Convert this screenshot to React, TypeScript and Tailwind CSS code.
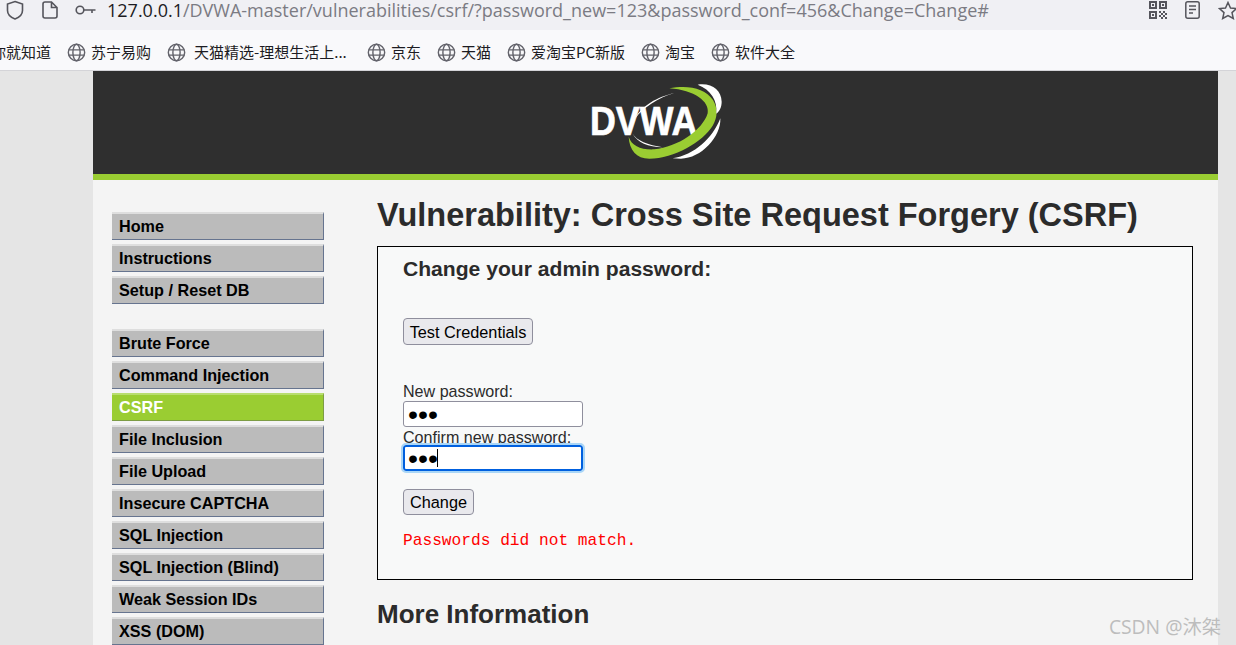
import { Fragment } from 'react';

const SANS = "font-['Liberation_Sans',Arial,sans-serif]";

const BOOKMARKS = [
  { label: '苏宁易购', cls: 'w-[100px] gap-[5px]' },
  { label: '天猫精选-理想生活上...', cls: 'w-[200px] gap-[8px]' },
  { label: '京东', cls: 'w-[70px] gap-[5px]' },
  { label: '天猫', cls: 'w-[70px] gap-[5px]' },
  { label: '爱淘宝PC新版', cls: 'w-[134px] gap-[5px]' },
  { label: '淘宝', cls: 'w-[70px] gap-[5px]' },
  { label: '软件大全', cls: 'w-[100px] gap-[5px]' },
];

const MENU_TOP = ['Home', 'Instructions', 'Setup / Reset DB'];
const MENU_VULNS = [
  'Brute Force',
  'Command Injection',
  'CSRF',
  'File Inclusion',
  'File Upload',
  'Insecure CAPTCHA',
  'SQL Injection',
  'SQL Injection (Blind)',
  'Weak Session IDs',
  'XSS (DOM)',
];

function GlobeIcon() {
  return (
    <svg width="19" height="19" viewBox="0 0 20 20" fill="none" stroke="#63636b" strokeWidth="1.5" className="shrink-0">
      <circle cx="10" cy="10" r="8.6" />
      <ellipse cx="10" cy="10" rx="3.8" ry="8.6" />
      <path d="M1.8 7.2h16.4M1.8 12.8h16.4" />
    </svg>
  );
}

function Logo() {
  return (
    <svg width="190" height="103" viewBox="0 3 570 309">
      <text
        x="87"
        y="195"
        fill="#fff"
        stroke="#fff"
        strokeWidth="2"
        fontFamily="Liberation Sans, Arial, sans-serif"
        fontWeight="700"
        fontSize="122"
        textLength="322"
        lengthAdjust="spacingAndGlyphs"
      >
        DVWA
      </text>
      <path
        d="M325 55C380 44 432 54 456 90C471 115 470 142 455 167C425 216 340 265 265 266C226 266 205 240 203 200C212 228 240 240 280 238C350 232 425 180 440 130C447 95 400 60 325 55Z"
        fill="#9acd32"
      />
      <path d="M410 44C452 38 481 60 482 95C482 110 476 124 466 131C470 90 450 60 410 44Z" fill="#fff" />
      <path d="M335 265C400 255 455 205 478 145C481 200 420 266 360 266Z" fill="#fff" />
      <path d="M340 69C290 80 240 108 222 146C245 114 290 84 340 69Z" fill="#fff" />
      <path d="M214 190C225 212 262 226 305 232C262 232 228 218 214 190Z" fill="#fff" />
    </svg>
  );
}

function MenuItem({ label, active }: { label: string; active?: boolean }) {
  return (
    <div
      className={`h-[28px] w-[212px] pl-[7px] border-t-2 border-r border-b text-[16.200px] leading-[24px] font-bold whitespace-nowrap ${
        active
          ? 'bg-[#9acd32] text-white border-t-[#b8dd6e] border-r-[#7d9c45] border-b-[#7d9c45]'
          : 'bg-[#bbbbbb] text-black border-t-[#dedede] border-r-[#66748f] border-b-[#66748f]'
      }`}
    >
      {label}
    </div>
  );
}

export default function App() {
  return (
    <div className={`h-[645px] w-[1236px] overflow-hidden relative bg-[#e5e5e5] ${SANS}`}>
      {/* browser toolbar */}
      <div className="h-[30px] bg-[#f0f0f4] flex items-center pl-[6px] pb-[10px]">
        <svg width="18" height="20" viewBox="0 0 18 20" fill="none" stroke="#55555c" strokeWidth="1.6" className="shrink-0">
          <path d="M9 1.5 16.5 4v6.5C16.5 14.5 13 17.5 9 19 5 17.5 1.500 14.500 1.500 10.500V4Z" />
        </svg>
        <svg width="16" height="18" viewBox="0 0 16 18" fill="none" stroke="#55555c" strokeWidth="1.6" className="shrink-0 ml-[18px]">
          <path d="M3 1h6.500L15 6.500V15a2 2 0 0 1-2 2H3a2 2 0 0 1-2-2V3a2 2 0 0 1 2-2ZM9.500 1v5.500H15" />
        </svg>
        <svg width="21" height="12" viewBox="0 0 21 12" fill="none" stroke="#55555c" strokeWidth="1.6" className="shrink-0 ml-[17px]">
          <circle cx="5" cy="6" r="3.800" />
          <path d="M9 6h11.500M17 6v3" />
        </svg>
        <div className="ml-[11px] whitespace-nowrap font-['Open_Sans',sans-serif] text-[18px] leading-[20px] text-[#7b7b83]">
          <span className="text-[#1c1b22]">127.0.0.1</span>
          /DVWA-master/vulnerabilities/csrf/?password_new=123&amp;password_conf=456&amp;Change=Change#
        </div>
        <div className="ml-auto flex items-center gap-[18px] shrink-0 -mr-[2px]">
          <svg width="18" height="18" viewBox="0 0 18 18" fill="#55555c">
            <path d="M0 0h8v8H0ZM2 2v4h4V2ZM10 0h8v8h-8ZM12 2v4h4V2ZM0 10h8v8H0ZM2 12v4h4v-4ZM10 10h2v2h-2ZM14 10h2v2h-2ZM12 12h2v2h-2ZM16 12h2v2h-2ZM10 14h2v2h-2ZM14 14h2v2h-2ZM12 16h2v2h-2ZM16 16h2v2h-2ZM3 3h2v2H3ZM13 3h2v2h-2ZM3 13h2v2H3Z" fillRule="evenodd" />
          </svg>
          <svg width="15" height="18" viewBox="0 0 15 18" fill="none" stroke="#55555c" strokeWidth="1.500">
            <rect x="0.800" y="0.800" width="13.400" height="16.400" rx="2" />
            <path d="M4 5h7M4 8.500h7M4 12h4" />
          </svg>
          <svg width="20" height="19" viewBox="0 0 20 19" fill="none" stroke="#55555c" strokeWidth="1.500">
            <path d="M10 1.500 12.500 7l6 .6-4.500 4 1.300 5.900L10 14.500l-5.300 3 1.300-5.900-4.500-4 6-.6Z" />
          </svg>
        </div>
      </div>

      {/* bookmarks bar */}
      <div className="h-[41px] pt-[4px] bg-[#f9f9fb] border-b border-[#d4d4d8] flex items-center whitespace-nowrap overflow-hidden text-[15px] text-[#1c1b22] font-['Noto_Sans_CJK_SC',sans-serif]">
        <span className="ml-[-9px] w-[76px] shrink-0">你就知道</span>
        {BOOKMARKS.map((b) => (
          <div key={b.label} className={`flex items-center shrink-0 ${b.cls}`}>
            <GlobeIcon />
            <span>{b.label}</span>
          </div>
        ))}
      </div>

      {/* page */}
      <div className="ml-[93px] w-[1125px] h-[574px] bg-[#f4f4f4] overflow-hidden">
        <div className="h-[109px] bg-[#2f2f2f] border-b-[6px] border-[#9acd32] flex justify-center">
          <Logo />
        </div>

        <div className="flex">
          <div className="w-[284px] shrink-0 pl-[19px] pt-[32px]">
            <div className="flex flex-col gap-[4px]">
              {MENU_TOP.map((m) => (
                <MenuItem key={m} label={m} />
              ))}
            </div>
            <div className="flex flex-col gap-[4px] mt-[25px]">
              {MENU_VULNS.map((m) => (
                <Fragment key={m}>
                  <MenuItem label={m} active={m === 'CSRF'} />
                </Fragment>
              ))}
            </div>
          </div>

          <div className="w-[816px] text-[#2b2b2b]">
            <h1 className="mt-[15px] h-[51px] text-[32.500px] leading-[40px] font-bold whitespace-nowrap">
              Vulnerability: Cross Site Request Forgery (CSRF)
            </h1>
            <div className="h-[334px] border border-black bg-[#f8f9f9] pl-[25px] text-[16px]">
              <h3 className="mt-[9px] h-[62px] text-[21.100px] leading-[26px] font-bold">Change your admin password:</h3>
              <button className="h-[27px] w-[130px] rounded-[4px] border border-[#8f8f9d] bg-[#e9e9ed] text-black text-[16.300px] leading-none pt-px">
                Test Credentials
              </button>
              <div className="mt-[36px] h-[20px] leading-[20px] text-[16.100px]">New password:</div>
              <input
                type="password"
                defaultValue="123"
                readOnly
                className="block h-[26px] w-[180px] rounded-[3px] border border-[#8f8f9d] bg-white px-[4px] text-[28.500px] leading-none text-black outline-none"
              />
              <div className="h-[18px] leading-[18px] text-[16.100px] pt-px">Confirm new password:</div>
              <div className="relative w-[180px] h-[26px]">
                <input
                  type="password"
                  defaultValue="123"
                  readOnly
                  className="block h-[26px] w-[180px] rounded-[3px] border-2 border-[#0060df] bg-white px-[3px] text-[28.500px] leading-none text-black outline-2 outline-[#a9d6f7]"
                />
                <span className="absolute left-[34px] top-[4px] h-[18px] w-px bg-black" />
              </div>
              <button className="mt-[18px] h-[26px] w-[71px] block rounded-[4px] border border-[#8f8f9d] bg-[#e9e9ed] text-black text-[16.300px] leading-none">
                Change
              </button>
              <pre className="mt-[17px] font-['Liberation_Mono',monospace] text-[16.200px] leading-[18px] text-[#ff0000]">
                Passwords did not match.
              </pre>
            </div>
            <h2 className="mt-[18px] text-[26px] leading-[32px] font-bold">More Information</h2>
          </div>
        </div>
      </div>

      <div className="absolute right-[15px] bottom-[5px] text-[19.300px] leading-[26px] text-[#bdbdbd] font-['Open_Sans','Noto_Sans_CJK_SC',sans-serif]">
        CSDN @沐桀
      </div>
    </div>
  );
}
